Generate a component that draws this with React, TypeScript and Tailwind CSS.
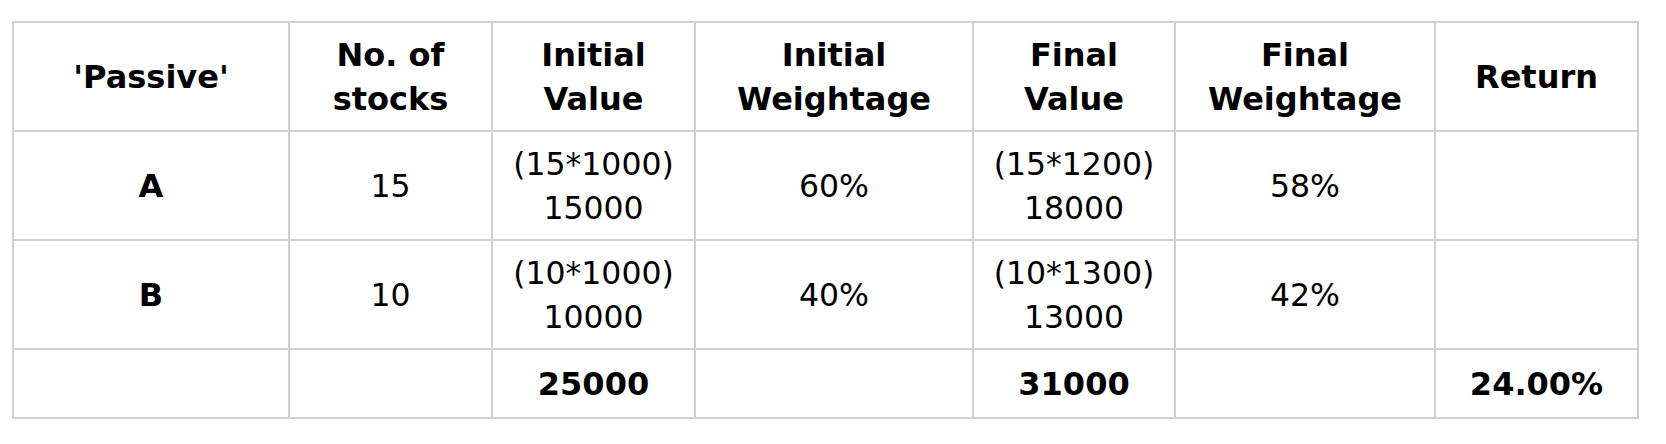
const headers = ["'Passive'", "No. of\nstocks", "Initial\nValue", "Initial\nWeightage", "Final\nValue", "Final\nWeightage", "Return"];
const widths = ["w-[276px]", "w-[203px]", "w-[203px]", "w-[278px]", "w-[202px]", "w-[260px]", "w-[203px]"];

const rows = [
  ["A", "15", "(15*1000)\n15000", "60%", "(15*1200)\n18000", "58%", ""],
  ["B", "10", "(10*1000)\n10000", "40%", "(10*1300)\n13000", "42%", ""],
];

const totals = ["", "", "25000", "", "31000", "", "24.00%"];

const cell = "border-2 border-[#d0d0d0] text-center align-middle whitespace-pre-line p-0";

export default function App() {
  return (
    <div className="w-[1666px] h-[444px] bg-white pt-[21px] pl-[12px] text-black font-['DejaVu_Sans','Verdana',sans-serif] text-[31px] leading-[44px]">
      <table className="border-collapse table-fixed w-[1626px]">
        <colgroup>
          {widths.map((w, i) => (
            <col key={i} className={w} />
          ))}
        </colgroup>
        <thead>
          <tr className="h-[109px]">
            {headers.map((h, i) => (
              <th key={i} className={`${cell} font-bold text-[32px]`}>
                {h}
              </th>
            ))}
          </tr>
        </thead>
        <tbody>
          {rows.map((r, ri) => (
            <tr key={ri} className="h-[109px]">
              {r.map((c, ci) => (
                <td key={ci} className={`${cell} ${ci === 0 ? "font-bold text-[32px]" : "text-[31.5px]"}`}>
                  {c}
                </td>
              ))}
            </tr>
          ))}
          <tr className="h-[69px]">
            {totals.map((c, ci) => (
              <td key={ci} className={`${cell} font-bold text-[32px]`}>
                {c}
              </td>
            ))}
          </tr>
        </tbody>
      </table>
    </div>
  );
}
